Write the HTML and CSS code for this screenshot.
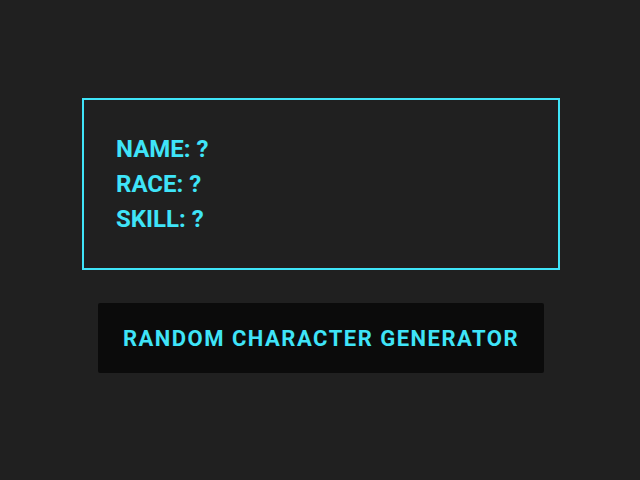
FILE: index.html
```html
<!DOCTYPE html>
<html>
<head>
<meta charset="utf-8">
<link rel="stylesheet" href="styles.css">
</head>
<body>
<main class="page">
  <section class="card">
    <div class="line">NAME: ?</div>
    <div class="line">RACE: ?</div>
    <div class="line">SKILL: ?</div>
  </section>
  <button class="gen">RANDOM CHARACTER GENERATOR</button>
</main>
</body>
</html>
```
FILE: styles.css
```css
html, body {
  margin: 0;
  padding: 0;
  background: #202020;
  height: 100%;
}
.page {
  display: flex;
  flex-direction: column;
  align-items: center;
  padding-top: 98px;
  gap: 33px;
  font-family: Roboto, "Liberation Sans", sans-serif;
}
.card {
  box-sizing: border-box;
  width: 478px;
  height: 172px;
  margin-left: 2px;
  border: 2px solid #3fe4f8;
  padding: 32px 32px;
  display: flex;
  flex-direction: column;
}
.line {
  color: #3fe4f8;
  font-weight: 700;
  font-size: 24px;
  line-height: 35px;
}
.gen {
  box-sizing: border-box;
  width: 446px;
  height: 70px;
  margin-left: 2px;
  background: #0b0b0b;
  border: none;
  border-radius: 2px;
  color: #3fe4f8;
  font-family: Roboto, "Liberation Sans", sans-serif;
  font-weight: 700;
  font-size: 22px;
  letter-spacing: 1.5px;
  padding: 0;
}
```
